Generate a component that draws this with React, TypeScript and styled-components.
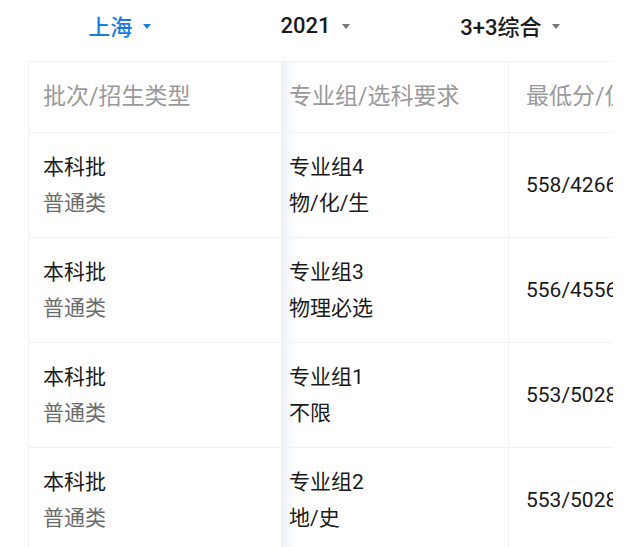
import React from "react";
import styled, { createGlobalStyle } from "styled-components";

const Global = createGlobalStyle`
  html, body { margin: 0; padding: 0; background: #fff; }
  body { font-family: Roboto, "Noto Sans CJK SC", sans-serif; }
`;

const Page = styled.div`
  width: 640px;
  height: 547px;
  overflow: hidden;
  background: #fff;
`;

const TabBar = styled.div`
  display: grid;
  grid-template-columns: repeat(3, 1fr);
  height: 50px;
  margin: 0 32px 11px 22px;
`;

const Tab = styled.div<{ $active?: boolean }>`
  display: flex;
  align-items: center;
  justify-content: center;
  gap: 11px;
  font-size: 22px;
  font-weight: 500;
  color: ${(p) => (p.$active ? "#1b7de2" : "#1a1a1a")};
`;

const Caret = styled.span<{ $active?: boolean }>`
  width: 0;
  height: 0;
  border-left: 4px solid transparent;
  border-right: 4px solid transparent;
  border-top: 5px solid ${(p) => (p.$active ? "#1b7de2" : "#777")};
  margin-top: 2px;
`;

const TableWrap = styled.div`
  margin: 0 27px 0 28px;
  overflow: hidden;
  border-left: 1px solid #f1f2f4;
  border-top: 1px solid #f1f2f4;
`;

const Row = styled.div<{ $head?: boolean }>`
  display: grid;
  grid-template-columns: 252px 227px 220px;
  width: 699px;
  height: ${(p) => (p.$head ? "70px" : "104px")};
  border-bottom: 1px solid #f1f2f4;
`;

const Cell = styled.div<{ $col: number; $head?: boolean }>`
  display: flex;
  flex-direction: column;
  justify-content: center;
  padding-left: ${(p) => (p.$col === 1 ? "14px" : p.$col === 2 ? "8px" : "17px")};
  border-left: ${(p) => (p.$col === 3 ? "1px solid #f1f2f4" : "none")};
  background: ${(p) =>
    p.$col === 2
      ? "linear-gradient(to right, #edf1f6 0px, #f4f7fa 7px, #ffffff 16px)"
      : "#fff"};
  font-size: ${(p) => (p.$head ? "23px" : "21px")};
  color: ${(p) => (p.$head ? "#9a9a9a" : "#1a1a1a")};
  white-space: nowrap;
  line-height: 36px;
`;

const Sub = styled.span<{ $muted?: boolean }>`
  color: ${(p) => (p.$muted ? "#6b6b6b" : "#1a1a1a")};
`;

const rows = [
  { g: "专业组4", req: "物/化/生", score: "558/42665" },
  { g: "专业组3", req: "物理必选", score: "556/45566" },
  { g: "专业组1", req: "不限", score: "553/50288" },
  { g: "专业组2", req: "地/史", score: "553/50288" },
];

export default function App() {
  return (
    <Page>
      <Global />
      <TabBar>
        <Tab $active>
          上海<Caret $active />
        </Tab>
        <Tab>
          2021<Caret />
        </Tab>
        <Tab>
          3+3综合<Caret />
        </Tab>
      </TabBar>
      <TableWrap>
        <Row $head>
          <Cell $col={1} $head>批次/招生类型</Cell>
          <Cell $col={2} $head>专业组/选科要求</Cell>
          <Cell $col={3} $head>最低分/位次</Cell>
        </Row>
        {rows.map((r, i) => (
          <Row key={i}>
            <Cell $col={1}>
              <Sub>本科批</Sub>
              <Sub $muted>普通类</Sub>
            </Cell>
            <Cell $col={2}>
              <Sub>{r.g}</Sub>
              <Sub>{r.req}</Sub>
            </Cell>
            <Cell $col={3}>{r.score}</Cell>
          </Row>
        ))}
      </TableWrap>
    </Page>
  );
}
